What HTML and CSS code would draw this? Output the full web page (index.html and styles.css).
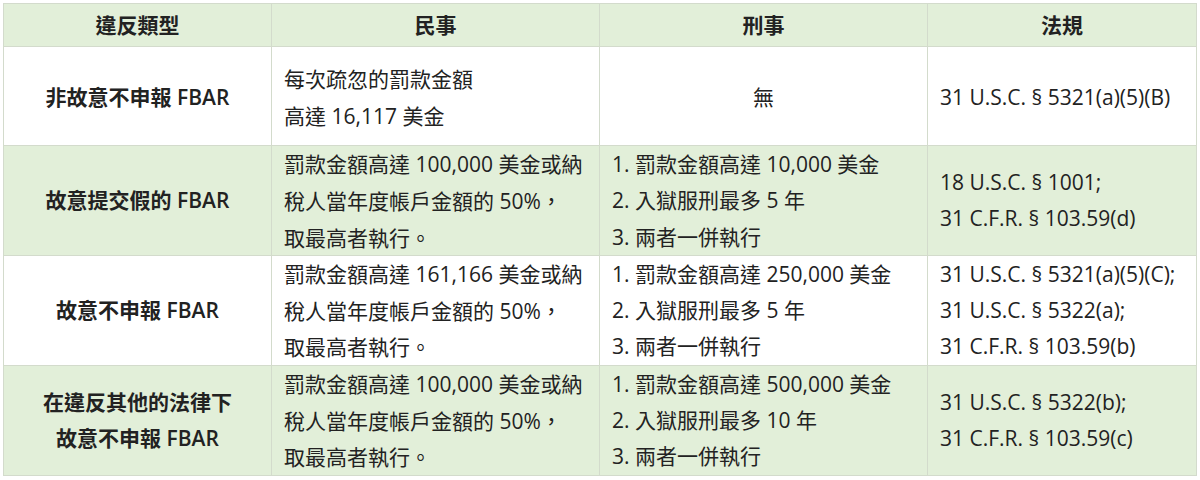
FILE: index.html
```html
<!DOCTYPE html>
<html lang="zh-Hant-TW">
<head>
<meta charset="utf-8">
<link rel="stylesheet" href="styles.css">
</head>
<body>
<div class="wrap">
<table class="fbar">
  <colgroup>
    <col class="c-type"><col class="c-civil"><col class="c-crim"><col class="c-law">
  </colgroup>
  <thead>
    <tr class="head">
      <th>違反類型</th><th>民事</th><th>刑事</th><th>法規</th>
    </tr>
  </thead>
  <tbody>
    <tr class="r1">
      <td class="type"><div class="ln">非故意不申報 FBAR</div></td>
      <td><div class="ln">每次疏忽的罰款金額</div><div class="ln">高達 16,117 美金</div></td>
      <td class="center"><div class="ln">無</div></td>
      <td><div class="ln">31 U.S.C. § 5321(a)(5)(B)</div></td>
    </tr>
    <tr class="band">
      <td class="type"><div class="ln">故意提交假的 FBAR</div></td>
      <td><div class="ln">罰款金額高達 100,000 美金或納</div><div class="ln">稅人當年度帳戶金額的 50%<span class="p">，</span></div><div class="ln">取最高者執行<span class="p">。</span></div></td>
      <td><div class="ln">1. 罰款金額高達 10,000 美金</div><div class="ln">2. 入獄服刑最多 5 年</div><div class="ln">3. 兩者一併執行</div></td>
      <td><div class="ln">18 U.S.C. § 1001;</div><div class="ln">31 C.F.R. § 103.59(d)</div></td>
    </tr>
    <tr>
      <td class="type"><div class="ln">故意不申報 FBAR</div></td>
      <td><div class="ln">罰款金額高達 161,166 美金或納</div><div class="ln">稅人當年度帳戶金額的 50%<span class="p">，</span></div><div class="ln">取最高者執行<span class="p">。</span></div></td>
      <td><div class="ln">1. 罰款金額高達 250,000 美金</div><div class="ln">2. 入獄服刑最多 5 年</div><div class="ln">3. 兩者一併執行</div></td>
      <td><div class="ln">31 U.S.C. § 5321(a)(5)(C);</div><div class="ln">31 U.S.C. § 5322(a);</div><div class="ln">31 C.F.R. § 103.59(b)</div></td>
    </tr>
    <tr class="band">
      <td class="type"><div class="ln">在違反其他的法律下</div><div class="ln">故意不申報 FBAR</div></td>
      <td><div class="ln">罰款金額高達 100,000 美金或納</div><div class="ln">稅人當年度帳戶金額的 50%<span class="p">，</span></div><div class="ln">取最高者執行<span class="p">。</span></div></td>
      <td><div class="ln">1. 罰款金額高達 500,000 美金</div><div class="ln">2. 入獄服刑最多 10 年</div><div class="ln">3. 兩者一併執行</div></td>
      <td><div class="ln">31 U.S.C. § 5322(b);</div><div class="ln">31 C.F.R. § 103.59(c)</div></td>
    </tr>
  </tbody>
</table>
</div>
</body>
</html>
```
FILE: styles.css
```css
html, body {
  margin: 0;
  padding: 0;
  background: #ffffff;
}
.wrap {
  padding: 3px 4px 0 3px;
}
.fbar {
  width: 1193px;
  border-collapse: collapse;
  table-layout: fixed;
  font-family: "Open Sans", "Noto Sans CJK TC", sans-serif;
  font-size: 21px;
  color: #222222;
}
.c-type { width: 268px; }
.c-civil { width: 328px; }
.c-crim { width: 328px; }
.c-law { width: 269px; }
.fbar th, .fbar td {
  border: 1px solid #d3dbcc;
  padding: 0 12px;
  vertical-align: middle;
  text-align: left;
}
.head {
  background: #e2efd9;
  height: 41px;
}
.fbar th {
  text-align: center;
  font-weight: 700;
  height: 40px;
  padding: 0 12px 2px 12px;
}
.ln {
  height: 36.3px;
  line-height: 36.3px;
  white-space: nowrap;
}
.fbar tbody tr { height: 109px; }
.fbar tbody tr.r1 { height: 99px; }
.fbar tbody tr.r1 td { padding-top: 3px; }
.band { background: #e2efd9; }
.fbar td.type {
  text-align: center;
  font-weight: 600;
}
.fbar td.center { text-align: center; }
.p {
  font-family: "Noto Sans CJK TC", sans-serif;
}
```
